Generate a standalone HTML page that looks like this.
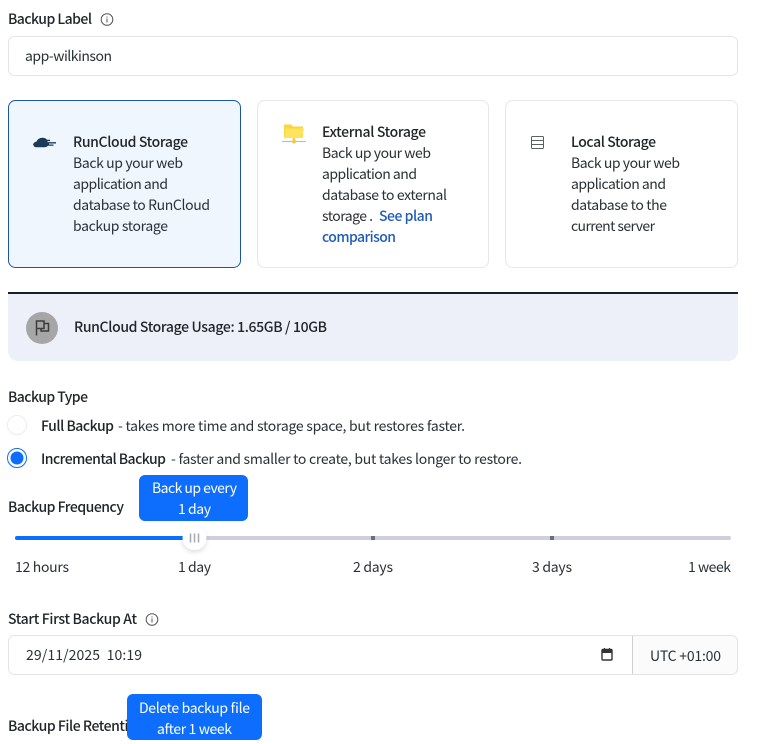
<!DOCTYPE html>
<html lang="en"><head><meta charset="utf-8"><title>Backup</title>
<style>
html,body{margin:0;padding:0;background:#fff;width:757px;height:744px;overflow:hidden}
svg{display:block}
text{font-family:"Noto Sans CJK JP","Liberation Sans",sans-serif;font-size:14px;fill:#2b3036;white-space:pre}
.b{font-weight:500;fill:#212529}
.w{fill:#fff}
.l{font-weight:500;fill:#1f5bb8}
</style></head><body>
<svg width="757" height="744" viewBox="0 0 757 744" xmlns="http://www.w3.org/2000/svg">
<defs><filter id="s" x="-50%" y="-50%" width="200%" height="200%"><feDropShadow dx="0" dy="2" stdDeviation="2.500" flood-color="#000" flood-opacity=".14"/></filter></defs>

<text class="b" x="8" y="24" textLength="84">Backup Label</text>
<circle cx="107" cy="19.500" r="5.800" fill="none" stroke="#555" stroke-width="1"/><rect x="106.500" y="18.500" width="1" height="4" fill="#555"/><rect x="106.500" y="16.500" width="1" height="1" fill="#555"/>
<rect x="8.500" y="36.500" width="729" height="39" rx="6" fill="#fff" stroke="#e4e4e7"/>
<text x="25" y="61" textLength="87">app-wilkinson</text>

<rect x="8.500" y="100.500" width="232" height="167" rx="7" fill="#eff6fe" stroke="#1c55a8"/>
<rect x="257.500" y="100.500" width="231" height="167" rx="7" fill="#fff" stroke="#e6e6ea"/>
<rect x="505.500" y="100.500" width="232" height="167" rx="7" fill="#fff" stroke="#e6e6ea"/>

<path d="M33 145.500c0-2.300 1.500-3.600 3.500-3.900 1-2.400 3.200-3.800 6-3.800 2 0 3.500.8 4.500 2h3v1.300h-2.500v1h8.500v1.400h-7v1h4.500v1.300h-5.500c-1 1-2 1.500-3.500 1.500h-8c-2 0-3-1-3-2.800z" fill="#1f3a56"/>
<text class="b" x="73" y="147" textLength="115">RunCloud Storage</text>
<text x="73" y="168" textLength="110">Back up your web</text>
<text x="73" y="189" textLength="95">application and</text>
<text x="73" y="210" textLength="137">database to RunCloud</text>
<text x="73" y="231" textLength="95">backup storage</text>

<path d="M284 124.500h7l2 2h10v11h-19z" fill="#f7d63e"/>
<path d="M285.500 128.500h18.500l-2 9.500h-17.500z" fill="#ffe35c"/>
<rect x="282" y="141" width="24" height="1" fill="#b9b4dc"/><circle cx="294" cy="141.500" r="2" fill="#f5c842"/><rect x="293" y="138" width="2" height="3" fill="#f5c842"/>
<text class="b" x="322" y="137" textLength="104">External Storage</text>
<text x="322" y="158" textLength="109">Back up your web</text>
<text x="322" y="179" textLength="95">application and</text>
<text x="322" y="200" textLength="125">database to external</text>
<text x="322" y="221" textLength="51">storage .</text>
<text class="l" x="379" y="221" textLength="54">See plan</text>
<text class="l" x="322" y="242" textLength="74">comparison</text>

<rect x="531.500" y="136.500" width="12" height="12" rx="1" fill="none" stroke="#5c5f63"/><path d="M531.500 140.500h12M531.500 144.500h12" stroke="#5c5f63" fill="none"/>
<text class="b" x="571" y="147" textLength="85">Local Storage</text>
<text x="571" y="168" textLength="109">Back up your web</text>
<text x="571" y="189" textLength="95">application and</text>
<text x="571" y="210" textLength="96">database to the</text>
<text x="571" y="231" textLength="84">current server</text>

<path d="M8 292h730v59a10 10 0 0 1-10 10H18a10 10 0 0 1-10-10z" fill="#edf0f8"/>
<rect x="8" y="292" width="730" height="2" fill="#1b1d20"/>
<circle cx="42" cy="328" r="16" fill="#a6a6a6"/>
<path d="M36.500 335.500v-14.500h7.500v2.500h4.500v7.500H41v-2.500h-4.500M44 323.500v5h-3" fill="none" stroke="#3c3c3c" stroke-width="1.500"/>
<text class="b" x="74" y="332" textLength="253">RunCloud Storage Usage: 1.65GB / 10GB</text>

<text class="b" x="8" y="402" textLength="80">Backup Type</text>
<circle cx="17" cy="425" r="9.500" fill="#fff" stroke="#ececee"/>
<text class="b" x="41" y="431" textLength="73">Full Backup</text>
<text x="118" y="431" textLength="347">- takes more time and storage space, but restores faster.</text>
<circle cx="17" cy="458" r="9.500" fill="#fff" stroke="#0d6efd"/>
<circle cx="17" cy="458" r="6.500" fill="#0d6efd"/>
<text class="b" x="41" y="464" textLength="125">Incremental Backup</text>
<text x="171" y="464" textLength="351">- faster and smaller to create, but takes longer to restore.</text>

<text class="b" x="8" y="512" textLength="116">Backup Frequency</text>
<rect x="139" y="475" width="109" height="46" rx="6" fill="#0d6efd"/>
<text class="w" x="152" y="493" textLength="85">Back up every</text>
<text class="w" x="178" y="514" textLength="33">1 day</text>

<rect x="15" y="536" width="716" height="4" rx="2" fill="#cdcfdf"/>
<rect x="15" y="536" width="170" height="4" rx="2" fill="#0d6efd"/>
<rect x="371" y="536" width="4" height="4" fill="#6d6d78"/>
<rect x="550" y="536" width="4" height="4" fill="#6d6d78"/>
<circle cx="194.500" cy="538" r="12" fill="#fff" filter="url(#s)"/>
<path d="M190.500 533.500v9M194.500 533.500v9M198.500 533.500v9" stroke="#a9abb5" stroke-width="1.600" fill="none"/>

<text x="15" y="572" textLength="54">12 hours</text>
<text x="178" y="572" textLength="33">1 day</text>
<text x="353" y="572" textLength="40">2 days</text>
<text x="532" y="572" textLength="40">3 days</text>
<text x="688" y="572" textLength="43">1 week</text>

<text class="b" x="8" y="624" textLength="129">Start First Backup At</text>
<circle cx="152" cy="619.500" r="5.800" fill="none" stroke="#555"/><rect x="151.500" y="618.500" width="1" height="4" fill="#555"/><rect x="151.500" y="616.500" width="1" height="1" fill="#555"/>
<rect x="8.500" y="635.500" width="729" height="39" rx="6" fill="#fff" stroke="#e4e4e7"/>
<path d="M632.500 635.500H731.500a6 6 0 0 1 6 6v27a6 6 0 0 1-6 6H632.500z" fill="#fbfbfb" stroke="#e4e4e7"/>
<rect x="632" y="636" width="1" height="38" fill="#cfcfd2"/>
<text x="26" y="660" textLength="116">29/11/2025  10:19</text>
<rect x="602" y="649.500" width="10" height="10.500" rx="1" fill="none" stroke="#333" stroke-width="1.400"/><rect x="602" y="650" width="10" height="3" fill="#333"/><path d="M604.500 648v2M609.500 648v2" stroke="#333" stroke-width="1.200"/>
<text x="650" y="661" textLength="71">UTC +01:00</text>

<text class="b" x="8" y="731" textLength="137">Backup File Retention</text>
<rect x="127" y="694" width="135" height="46" rx="6" fill="#0d6efd"/>
<text class="w" x="139" y="713" textLength="111">Delete backup file</text>
<text class="w" x="157" y="734" textLength="75">after 1 week</text>
</svg>
</body></html>
